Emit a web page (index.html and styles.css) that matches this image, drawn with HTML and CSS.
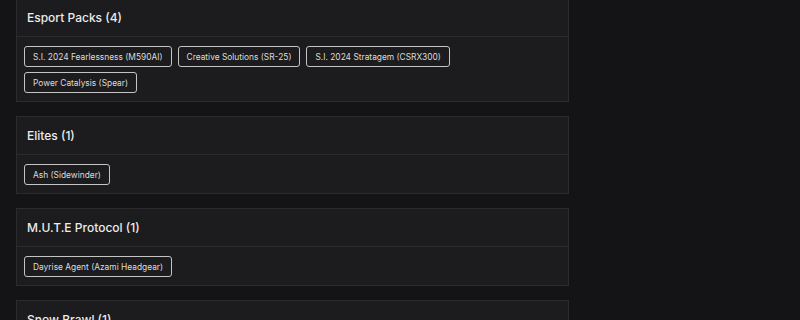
FILE: index.html
```html
<!DOCTYPE html>
<html lang="en">
<head>
  <meta charset="UTF-8" />
  <title>Collections</title>
  <link rel="stylesheet" href="styles.css">
</head>
<body>
  <!-- Collection groups -->
  <div class="groups">
    <section class="group first">
      <div class="group-head">Esport Packs (4)</div>
      <div class="group-body">
        <span class="chip">S.I. 2024 Fearlessness (M590AI)</span>
        <span class="chip">Creative Solutions (SR-25)</span>
        <span class="chip">S.I. 2024 Stratagem (CSRX300)</span>
        <span class="chip">Power Catalysis (Spear)</span>
      </div>
    </section>

    <section class="group">
      <div class="group-head">Elites (1)</div>
      <div class="group-body">
        <span class="chip">Ash (Sidewinder)</span>
      </div>
    </section>

    <section class="group">
      <div class="group-head">M.U.T.E Protocol (1)</div>
      <div class="group-body">
        <span class="chip">Dayrise Agent (Azami Headgear)</span>
      </div>
    </section>

    <section class="group">
      <div class="group-head">Snow Brawl (1)</div>
      <div class="group-body">
        <span class="chip">Frost Bite (Kali)</span>
      </div>
    </section>
  </div>
</body>
</html>
```

FILE: styles.css
```css
/* Reset */
* {
  margin: 0;
  padding: 0;
  box-sizing: border-box;
}
html, body {
  width: 100%;
  height: 100%;
  overflow: hidden;
  background: #141316;
  font-family: Inter, "Open Sans", sans-serif;
}
/* Column of groups */
.groups {
  width: 585px;
  padding: 0 16px;
  display: flex;
  flex-direction: column;
  gap: 14px;
}
.group {
  background: #1c1b1e;
  border: 1px solid #2b2a2d;
}
.group.first {
  margin-top: -2px;
}
.group-head {
  height: 38px;
  padding: 0 10px;
  display: flex;
  align-items: center;
  border-bottom: 1px solid #2b2a2d;
  color: #ececec;
  font-size: 12px;
  font-weight: 500;
}
.group-body {
  display: flex;
  flex-wrap: wrap;
  gap: 5px 6px;
  padding: 9px 7px 8px;
}
/* Item chips */
.chip {
  display: inline-flex;
  align-items: center;
  height: 21px;
  padding: 0 8px;
  border: 1px solid #c4c4c4;
  border-radius: 3px;
  color: #dcdcdc;
  font-size: 8.4px;
  font-weight: 400;
}
```
